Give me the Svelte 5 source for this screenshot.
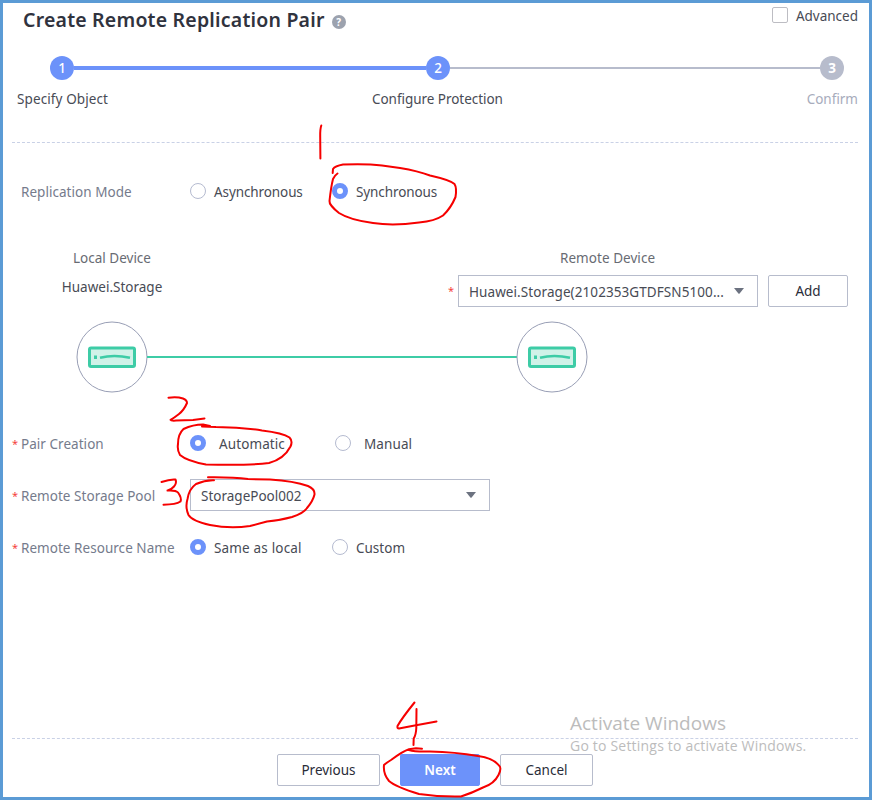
<script>
  const marks = [
    'M321.3 125.5 Q320 129 320.2 137 L320.4 158.5',
    'M332.7 173 L333 169 Q335 166 343 164.5 Q366 163.5 382 165.5 L400 168 Q418 171 430 175.5 Q450 180 454.5 184 Q457 188 455.5 197 Q451 208 443 215.5 Q435 221 419 222.5 Q393 226 373 223 Q350 220 339 213 Q329 205 329.5 201 Q331 187 333 179 Q335 175 337.5 173.5',
    'M168.5 397.7 Q177 396.5 183 398.5 Q187 400 187 403 Q184 410 179 414 Q174 418 170.5 419.8 Q171 421 176 420.5 L193 420 L204.5 418.5',
    'M202 426.5 L216 427 Q240 427 262 430.5 Q283 433 289.5 437.5 Q293 441 290.5 446.5 Q284 459 269 463 Q250 465.5 206 464.5 Q187 461 180 455 Q177 450 178 444 Q178 434 183.5 429 Q193 424.5 203 424.5 L210 426',
    'M161.5 482 Q170 479 175.5 479.5 Q177 483 174 486.5 Q171 490 167.5 490.5 Q176 490 178 492.5 Q182 498 180.5 501.5 Q176 504.5 163.5 504.7',
    'M208 477.3 Q233 477 248 479 L270 479.5 Q294 481 308 486 Q315 489 314.5 494.5 Q313 501 307 508 Q304 513 292 517 Q281 520 267 521.5 Q258 524 250 526 Q230 529 210 525 Q192 521 188.500 515 Q185 507 187.500 499 Q189 489 196 484 Q205 480 214 480.300',
    'M414.500 702.500 Q402 718 397.500 726 Q397 728.500 399 728.500 L412 726 L436.500 721.500',
    'M416.500 709 L416.300 728 Q416 735 413.700 738.500 L413.500 745',
    'M409 750 Q415 752 430 751.500 Q455 752 478 756 Q493 758 499 765.500 Q502 768 498.500 775 Q494 784 483 787.500 Q472 793 461 796.500 Q440 797 419 794 Q396 787 389 781 Q383 774 384 765 Q386 763 391 760 Q403 751 409 749.200 L416 748.300 L422 748.700'
  ];
</script>

{#snippet radio(label, on = false, cls = '')}
  <label class="choice {cls}"><span class="radio" class:on></span><span>{label}</span></label>
{/snippet}

{#snippet device()}
  <svg class="device" width="72" height="72" viewBox="0 0 72 72">
    <circle cx="36" cy="36" r="35" fill="#fff" stroke="#989eb5" />
    <rect x="13.500" y="27" width="45" height="18.500" rx="1.500" fill="#d0f2e8" stroke="#3dcca6" stroke-width="3" />
    <rect x="18" y="34.500" width="3" height="3.500" fill="#3dcca6" />
    <path d="M24 36.800 Q38 33.200 54 36.800" fill="none" stroke="#3dcca6" stroke-width="2.600" />
  </svg>
{/snippet}

{#snippet arrow()}
  <svg class="arrow" width="10" height="6" viewBox="0 0 10 6"><path d="M0 0H10L5.600 5.500Q5 6 4.400 5.500Z" fill="#6c7280" /></svg>
{/snippet}

<div class="dialog">
  <header>
    <h1>Create Remote Replication Pair</h1>
    <span class="help">?</span>
    <label class="advanced"><span class="box"></span><span>Advanced</span></label>
  </header>

  <div class="steps">
    <span class="dot">1</span><i class="line done"></i><span class="dot">2</span><i class="line"></i><span class="dot off">3</span>
  </div>
  <div class="names"><span class="n1">Specify Object</span><span class="n2">Configure Protection</span><span class="n3">Confirm</span></div>

  <main>
    <div class="row mode">
      <span class="name">Replication Mode</span>
      {@render radio('Asynchronous', false, 'async')}
      {@render radio('Synchronous', true, 'sync')}
    </div>

    <section class="devices">
      <div class="local"><span class="caption">Local Device</span><span class="host">Huawei.Storage</span></div>
      <div class="remote">
        <span class="caption">Remote Device</span>
        <div class="pick">
          <b class="star">*</b>
          <div class="select"><span class="long">Huawei.Storage(2102353GTDFSN5100...</span>{@render arrow()}</div>
          <button class="add">Add</button>
        </div>
      </div>
    </section>
    <div class="link">{@render device()}<i></i>{@render device()}</div>

    <div class="row pair">
      <b class="star">*</b><span class="name">Pair Creation</span>
      {@render radio('Automatic', true, 'auto')}
      {@render radio('Manual', false, 'manual')}
    </div>
    <div class="row">
      <b class="star">*</b><span class="name">Remote Storage Pool</span>
      <div class="select pool"><span>StoragePool002</span>{@render arrow()}</div>
    </div>
    <div class="row">
      <b class="star">*</b><span class="name">Remote Resource Name</span>
      {@render radio('Same as local', true, 'same')}
      {@render radio('Custom')}
    </div>
  </main>

  <footer>
    <button class="prev">Previous</button>
    <button class="next">Next</button>
    <button class="cancel">Cancel</button>
  </footer>

  <div class="watermark"><p>Activate Windows</p><small>Go to Settings to activate Windows.</small></div>
  <svg class="ink" width="872" height="801" viewBox="0 0 872 801">
    {#each marks as d}<path {d} />{/each}
  </svg>
</div>

<style>
  :global(body) { margin: 0; background: #fff; }
  .dialog {
    position: relative; box-sizing: border-box; width: 872px; height: 800px;
    border: 3px solid #5b9bd5; background: #fff; color: #484b55;
    font: 13.500px/20px "Noto Sans", sans-serif;
    display: flex; flex-direction: column; white-space: nowrap;
  }
  header { display: flex; height: 53px; padding: 0 11px 0 20px; align-items: flex-start; }
  h1 { margin: 4px 0 0; font-size: 19.500px; line-height: 26px; font-weight: 600; letter-spacing: 0.2px; color: #30333e; }
  .help {
    width: 14px; height: 14px; margin: 12px 0 0 7px; border-radius: 50%; background: #9ca2ae;
    color: #fff; font-size: 10px; line-height: 14px; font-weight: 700; text-align: center;
  }
  .advanced { margin: 3px 0 0 auto; display: flex; gap: 8px; }
  .box { box-sizing: border-box; width: 16px; height: 16px; margin-top: 1px; border: 1px solid #bdbdc3; border-radius: 2px; }
  .steps { display: flex; align-items: center; height: 24px; padding: 0 25px 0 47px; }
  .dot { width: 24px; height: 24px; border-radius: 50%; background: #6c92fa; color: #fff; line-height: 24px; text-align: center; font-weight: 500; }
  .dot.off { background: #b7bccc; font-weight: 700; }
  .line { flex: 0 0 352px; height: 4px; background: #6c92fa; }
  .line:not(.done) { flex-basis: 370px; height: 2px; background: #b7bccc; }
  .names { display: flex; margin: 9px 11px 0 9px; padding: 0 0 33px 5px; height: 20px; border-bottom: 1px dashed #c9d1e6; }
  .n1 { width: 355px; letter-spacing: 0.1px; }
  .n2 { letter-spacing: -0.04px; }
  .n3 { margin-left: auto; color: #a7acbc; }
  main { height: 595px; }
  .row { display: flex; align-items: center; height: 32px; padding-left: 9px; margin-bottom: 20px; }
  .star { width: 9px; color: #f5433c; font-weight: 400; font-size: 11px; line-height: 16px; }
  .name { width: 169px; color: #757b8c; letter-spacing: 0.04px; }
  .mode { padding: 33px 0 0 18px; margin: 0; }
  .choice { display: flex; align-items: center; gap: 8px; }
  .radio { box-sizing: border-box; width: 16px; height: 16px; margin-top: -2px; border: 1px solid #b5bbd0; border-radius: 50%; }
  .radio.on { border: 5.500px solid #6c92fa; }
  .async { width: 142px; }
  .async, .sync { letter-spacing: -0.1px; }
  .auto { width: 145px; }
  .auto, .manual { gap: 13px; letter-spacing: 0.1px; }
  .same { width: 142px; }
  .same span:last-child { letter-spacing: 0.17px; }
  .devices { display: flex; height: 73px; padding: 40px 0 0 9px; box-sizing: content-box; }
  .local { flex: none; width: 200px; display: flex; flex-direction: column; align-items: center; }
  .caption { color: #686b73; }
  .host { margin-top: 9px; }
  .remote { flex: none; width: 400px; margin-left: 236px; display: flex; flex-direction: column; }
  .remote .caption { margin-left: 112px; letter-spacing: 0.05px; }
  .pick { display: flex; margin-top: 7px; align-items: center; }
  .pick .star { width: 10px; }
  .long { letter-spacing: 0.08px; padding-top: 2px; }
  .select {
    box-sizing: border-box; width: 300px; height: 32px; border: 1px solid #b7bccc;
    padding: 0 13px 0 10px; display: flex; align-items: center; justify-content: space-between;
  }
  .pool { margin-top: -2px; }
  .pool span { padding-top: 2px; }
  button { box-sizing: border-box; height: 32px; padding: 0; border: 1px solid #b7bccc; border-radius: 2px; background: #fff; color: #292c38; font: inherit; }
  .add { width: 80px; margin-left: 10px; }
  .link { display: flex; align-items: center; height: 72px; padding-left: 73px; margin-bottom: 35px; }
  .link i { width: 370px; height: 2px; margin: 0 -1px; background: #3dcca6; }
  footer { margin: 0 11px 0 9px; padding: 15px 0 0 265px; display: flex; gap: 20px; border-top: 1px dashed #c9d1e6; }
  .prev { width: 103px; }
  .next { width: 80px; border-color: #6c92fa; background: #6c92fa; color: #fff; font-weight: 600; }
  .cancel { width: 93px; }
  .watermark { position: absolute; left: 567px; top: 708px; color: #bcbcbc; font-family: "Open Sans", sans-serif; }
  .watermark p { margin: 0; font-size: 19px; line-height: 24px; }
  .watermark small { display: block; font-size: 14px; line-height: 22px; letter-spacing: 0.2px; }
  .ink { position: absolute; left: -3px; top: -3px; }
  .ink path { fill: none; stroke: #f60000; stroke-width: 2; stroke-linecap: round; stroke-linejoin: round; }
</style>
